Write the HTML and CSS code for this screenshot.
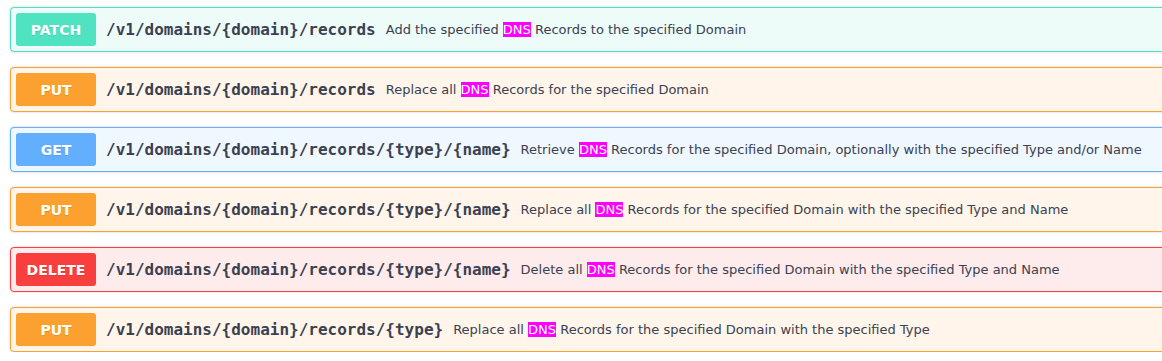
FILE: index.html
```html
<!DOCTYPE html>
<html>
<head>
<meta charset="utf-8">
<link rel="stylesheet" href="styles.css">
</head>
<body>
<div class="ops">
  <div class="opblock patch">
    <div class="summary"><span class="method">PATCH</span><span class="path">/v1/domains/{domain}/records</span><span class="desc">Add the specified <span class="hl">DNS</span> Records to the specified Domain</span></div>
  </div>
  <div class="opblock put">
    <div class="summary"><span class="method">PUT</span><span class="path">/v1/domains/{domain}/records</span><span class="desc">Replace all <span class="hl">DNS</span> Records for the specified Domain</span></div>
  </div>
  <div class="opblock get">
    <div class="summary"><span class="method">GET</span><span class="path">/v1/domains/{domain}/records/{type}/{name}</span><span class="desc">Retrieve <span class="hl">DNS</span> Records for the specified Domain, optionally with the specified Type and/or Name</span></div>
  </div>
  <div class="opblock put">
    <div class="summary"><span class="method">PUT</span><span class="path">/v1/domains/{domain}/records/{type}/{name}</span><span class="desc">Replace all <span class="hl">DNS</span> Records for the specified Domain with the specified Type and Name</span></div>
  </div>
  <div class="opblock delete">
    <div class="summary"><span class="method">DELETE</span><span class="path">/v1/domains/{domain}/records/{type}/{name}</span><span class="desc">Delete all <span class="hl">DNS</span> Records for the specified Domain with the specified Type and Name</span></div>
  </div>
  <div class="opblock put">
    <div class="summary"><span class="method">PUT</span><span class="path">/v1/domains/{domain}/records/{type}</span><span class="desc">Replace all <span class="hl">DNS</span> Records for the specified Domain with the specified Type</span></div>
  </div>
</div>
</body>
</html>
```
FILE: styles.css
```css
html, body {
  margin: 0;
  padding: 0;
  background: #fff;
  overflow: hidden;
}
body {
  font-family: "DejaVu Sans", sans-serif;
  color: #3b4151;
}
.ops {
  width: 1200px;
  padding: 7px 0 0 10px;
  display: flex;
  flex-direction: column;
  gap: 15px;
}
.opblock {
  border: 1px solid #000;
  border-radius: 4px;
  box-shadow: 0 0 3px rgba(0, 0, 0, 0.19);
}
.summary {
  display: flex;
  align-items: center;
  padding: 5px;
}
.method {
  min-width: 80px;
  height: 33px;
  box-sizing: border-box;
  display: flex;
  align-items: center;
  justify-content: center;
  border-radius: 3px;
  color: #fff;
  font-size: 14px;
  font-weight: 700;
  text-shadow: 0 1px 0 rgba(0, 0, 0, 0.1);
  padding: 0 10px;
}
.path {
  font-family: "DejaVu Sans Mono", monospace;
  font-size: 16px;
  font-weight: 700;
  color: #3b4151;
  padding: 0 10px;
  white-space: nowrap;
}
.desc {
  font-size: 13px;
  color: #3b4151;
  white-space: nowrap;
}
.hl {
  background: #ff00ff;
  color: #fff;
}
.patch { border-color: #50e3c2; background: #edfcf9; }
.patch .method { background: #50e3c2; }
.put { border-color: #fca130; background: #fff5ea; }
.put .method { background: #fca130; }
.get { border-color: #61affe; background: #eff7ff; }
.get .method { background: #61affe; }
.delete { border-color: #f93e3e; background: #feebeb; }
.delete .method { background: #f93e3e; }
```
